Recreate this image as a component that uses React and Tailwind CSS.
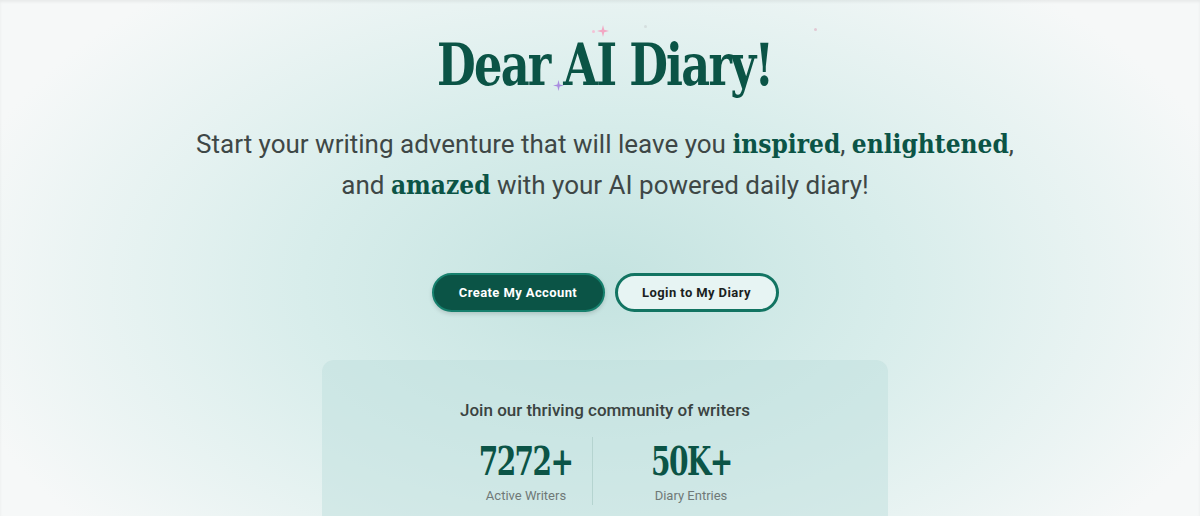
import React from "react"

const slab = { fontFamily: '"DejaVu Serif Condensed", "DejaVu Serif", serif' }

const Sparkle = ({ className, color }) => (
  <svg viewBox="0 0 20 20" className={className} fill={color}>
    <path d="M10 0 L12 8 L20 10 L12 12 L10 20 L8 12 L0 10 L8 8 Z" />
  </svg>
)

const Stat = ({ value, label, width }) => (
  <div className={`flex flex-col items-center ${width}`}>
    <span className="text-[39px] leading-[48px] font-bold tracking-[-2px] text-[#0b5446] scale-x-[0.8]" style={slab}>
      {value}
    </span>
    <span className="mt-[1px] text-[13px] text-[#6f7977]">{label}</span>
  </div>
)

export default function App() {
  return (
    <div
      className="relative w-full h-[516px] overflow-hidden bg-[radial-gradient(ellipse_55%_75%_at_50%_55%,#c4e3e0_0%,#d8edeb_45%,#f6f8f8_100%)] shadow-[inset_0_2px_3px_rgba(0,0,0,0.06)]"
      style={{ fontFamily: 'Roboto, "Noto Sans", sans-serif' }}
    >
      <Sparkle className="absolute left-[597px] top-[25px] w-[12px] h-[12px]" color="#f2a7c3" />
      <span className="absolute left-[592px] top-[30px] w-[3px] h-[3px] rounded-full bg-[#f4c2d6]" />
      <span className="absolute left-[644px] top-[25px] w-[3px] h-[3px] rounded-full bg-[#d5dede]" />
      <span className="absolute left-[814px] top-[28px] w-[3px] h-[3px] rounded-full bg-[#e2c8d4]" />
      <Sparkle className="absolute left-[553px] top-[80px] w-[11px] h-[11px]" color="#a98ce0" />

      <div className="flex flex-col items-center pl-[10px]">
        <h1 className="mt-[32px] text-[57px] leading-[66px] font-bold tracking-[-2px] text-[#0b5446] scale-x-[0.87]" style={slab}>
          Dear AI Diary!
        </h1>
        <p className="mt-[26px] text-center text-[26px] leading-[41px] text-[#3e4746]">
          Start your writing adventure that will leave you{" "}
          <b className="text-[#0b5446]" style={slab}>inspired</b>,{" "}
          <b className="text-[#0b5446]" style={slab}>enlightened</b>,
          <br />
          and <b className="text-[#0b5446]" style={slab}>amazed</b> with your AI powered daily diary!
        </p>

        <div className="mt-[67px] flex gap-[10px]">
          <button className="h-[39px] w-[173px] rounded-full bg-[#0b5446] border-2 border-[#16806d] text-white text-[13px] font-bold tracking-[0.4px] shadow-[0_2px_4px_rgba(0,0,0,0.15)]">
            Create My Account
          </button>
          <button className="h-[39px] w-[164px] rounded-full bg-[#e7f4f3] border-[3px] border-[#127462] text-[#1b1f1f] text-[13px] font-bold tracking-[0.4px]">
            Login to My Diary
          </button>
        </div>

        <div className="mt-[48px] w-[566px] h-[180px] rounded-[12px] bg-[#bfe0dd]/50 flex flex-col items-center">
          <p className="mt-[38px] text-[17px] font-medium text-[#3a4341]">Join our thriving community of writers</p>
          <div className="mt-[13px] self-start ml-[138px] flex items-stretch">
            <Stat value="7272+" label="Active Writers" width="w-[132px]" />
            <div className="w-px bg-[#b5d4d0]" />
            <Stat value="50K+" label="Diary Entries" width="w-[196px]" />
          </div>
        </div>
      </div>
    </div>
  )
}
